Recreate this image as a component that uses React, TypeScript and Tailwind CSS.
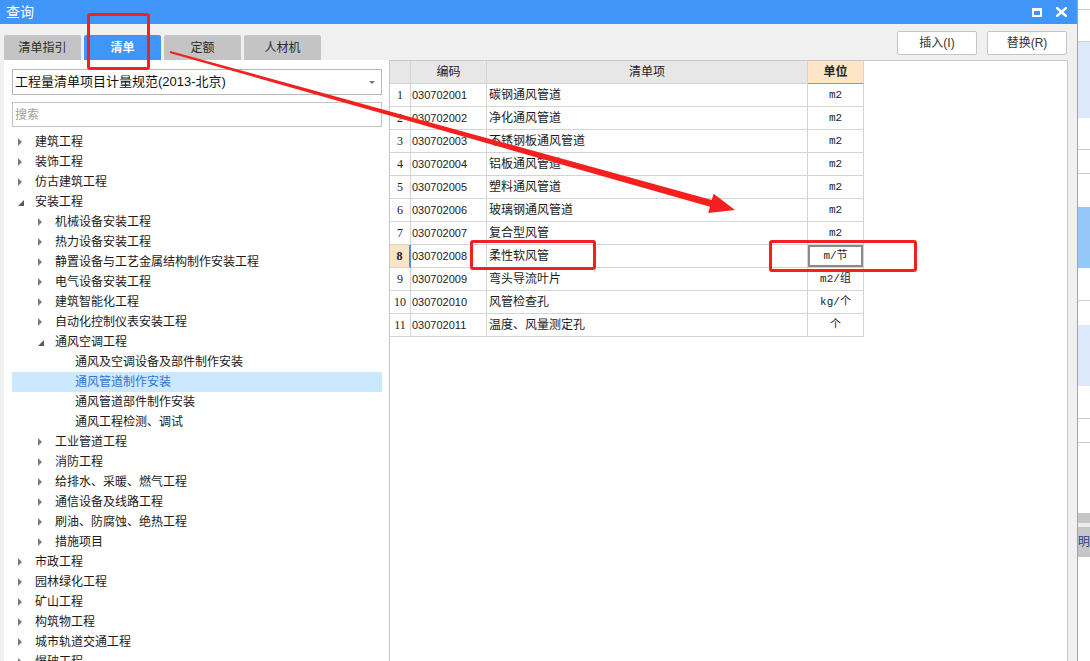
import React from "react";

const FONT = '"Liberation Sans","Noto Sans CJK SC",sans-serif';
const MONO = '"Liberation Mono","Noto Sans CJK SC",monospace';
const SERIF = '"Liberation Serif","Noto Sans CJK SC",serif';

type TNode = { label: string; level: number; arrow: "none" | "collapsed" | "expanded"; selected?: boolean };

const tree: TNode[] = [
  { label: "建筑工程", level: 0, arrow: "collapsed" },
  { label: "装饰工程", level: 0, arrow: "collapsed" },
  { label: "仿古建筑工程", level: 0, arrow: "collapsed" },
  { label: "安装工程", level: 0, arrow: "expanded" },
  { label: "机械设备安装工程", level: 1, arrow: "collapsed" },
  { label: "热力设备安装工程", level: 1, arrow: "collapsed" },
  { label: "静置设备与工艺金属结构制作安装工程", level: 1, arrow: "collapsed" },
  { label: "电气设备安装工程", level: 1, arrow: "collapsed" },
  { label: "建筑智能化工程", level: 1, arrow: "collapsed" },
  { label: "自动化控制仪表安装工程", level: 1, arrow: "collapsed" },
  { label: "通风空调工程", level: 1, arrow: "expanded" },
  { label: "通风及空调设备及部件制作安装", level: 2, arrow: "none" },
  { label: "通风管道制作安装", level: 2, arrow: "none", selected: true },
  { label: "通风管道部件制作安装", level: 2, arrow: "none" },
  { label: "通风工程检测、调试", level: 2, arrow: "none" },
  { label: "工业管道工程", level: 1, arrow: "collapsed" },
  { label: "消防工程", level: 1, arrow: "collapsed" },
  { label: "给排水、采暖、燃气工程", level: 1, arrow: "collapsed" },
  { label: "通信设备及线路工程", level: 1, arrow: "collapsed" },
  { label: "刷油、防腐蚀、绝热工程", level: 1, arrow: "collapsed" },
  { label: "措施项目", level: 1, arrow: "collapsed" },
  { label: "市政工程", level: 0, arrow: "collapsed" },
  { label: "园林绿化工程", level: 0, arrow: "collapsed" },
  { label: "矿山工程", level: 0, arrow: "collapsed" },
  { label: "构筑物工程", level: 0, arrow: "collapsed" },
  { label: "城市轨道交通工程", level: 0, arrow: "collapsed" },
  { label: "爆破工程", level: 0, arrow: "collapsed" },
];

const rows = [
  ["1", "030702001", "碳钢通风管道", "m2"],
  ["2", "030702002", "净化通风管道", "m2"],
  ["3", "030702003", "不锈钢板通风管道", "m2"],
  ["4", "030702004", "铝板通风管道", "m2"],
  ["5", "030702005", "塑料通风管道", "m2"],
  ["6", "030702006", "玻璃钢通风管道", "m2"],
  ["7", "030702007", "复合型风管", "m2"],
  ["8", "030702008", "柔性软风管", "m/节"],
  ["9", "030702009", "弯头导流叶片", "m2/组"],
  ["10", "030702010", "风管检查孔", "kg/个"],
  ["11", "030702011", "温度、风量测定孔", "个"],
];

function Arrow({ kind }: { kind: TNode["arrow"] }) {
  if (kind === "collapsed")
    return <div className="w-0 h-0 border-y-[4px] border-y-transparent border-l-[4px] border-l-[#7a7a7a]" />;
  if (kind === "expanded")
    return <div className="w-0 h-0 mt-[2px] border-b-[6px] border-b-[#5a5a5a] border-l-[6px] border-l-transparent" />;
  return null;
}

function TreeRow({ n }: { n: TNode }) {
  const pad = n.level === 0 ? "pl-[6px]" : n.level === 1 ? "pl-[26px]" : "pl-[46px]";
  return (
    <div className={`h-[20px] shrink-0 flex items-center ${pad} ${n.selected ? "bg-[#cce8ff]" : ""}`}>
      <div className="w-[17px] flex items-center">
        <Arrow kind={n.arrow} />
      </div>
      <span className={`text-[12px] leading-none whitespace-nowrap ${n.selected ? "text-[#2f74d6]" : "text-[#1a1a1a]"}`}>{n.label}</span>
    </div>
  );
}

function Tab({ label, active }: { label: string; active?: boolean }) {
  return (
    <div
      className={`w-[77px] h-[25px] pt-[1px] rounded-t-[2px] flex items-center justify-center text-[12px] ${
        active ? "bg-[#4096f8] text-white font-semibold" : "bg-[#c4c4c4] text-[#2a2a2a]"
      }`}
    >
      {label}
    </div>
  );
}

function Btn({ label }: { label: string }) {
  return (
    <div className="w-[80px] h-[24px] bg-white border border-[#c6c6c6] rounded-[2px] flex items-center justify-center text-[12px] text-[#333]">
      {label}
    </div>
  );
}

const cell = "border-r border-b border-[#d4d4d4] h-[23px] flex items-center";

function Table() {
  return (
    <div className="grid grid-cols-[21px_76px_321px_56px] w-[474px]">
      <div className={`${cell} bg-[#e7e7e7]`} />
      <div className={`${cell} bg-[#e7e7e7] justify-center text-[12px] text-[#222]`}>编码</div>
      <div className={`${cell} bg-[#e7e7e7] justify-center text-[12px] text-[#222]`}>清单项</div>
      <div className={`${cell} bg-[#fde5c6] justify-center text-[12px] font-bold text-[#222] border-b-[#5ea6ea]`}>单位</div>
      {rows.map((r) => {
        const sel = r[0] === "8";
        return (
          <React.Fragment key={r[0]}>
            <div
              className={`${cell} justify-center text-[12px] ${sel ? "bg-[#fde5c6] font-bold border-r-[#4a90e2] border-r-2" : "bg-white"} text-[#222]`}
              style={{ fontFamily: SERIF }}
            >
              {r[0]}
            </div>
            <div className={`${cell} bg-white pl-[1px] text-[11px] text-[#222]`}>{r[1]}</div>
            <div className={`${cell} bg-white pl-[2px] text-[12px] text-[#1a1a1a]`}>{r[2]}</div>
            <div className={`${cell} bg-white justify-center text-[11px] text-[#222] ${sel ? "p-0" : ""}`} style={{ fontFamily: MONO }}>
              {sel ? (
                <div className="w-full h-full border-2 border-[#8a8a8a] flex items-center justify-center">{r[3]}</div>
              ) : (
                r[3]
              )}
            </div>
          </React.Fragment>
        );
      })}
    </div>
  );
}

function OutsideStrip() {
  return (
    <div className="w-[12px] h-full flex flex-col bg-white">
      <div className="h-[10px] shrink-0 border-b border-[#cfcfcf]" />
      <div className="h-[32px] shrink-0 border-b border-[#cfcfcf]" />
      <div className="h-[76px] shrink-0 bg-[#dde8fb]" />
      <div className="h-[32px] shrink-0 border-b border-[#cfcfcf]" />
      <div className="h-[24px] shrink-0 border-b border-[#cfcfcf]" />
      <div className="h-[33px] shrink-0" />
      <div className="h-[61px] shrink-0 bg-[#93c8f7]" />
      <div className="h-[33px] shrink-0 border-b border-[#cfcfcf]" />
      <div className="h-[24px] shrink-0" />
      <div className="h-[61px] shrink-0 bg-[#dde8fb]" />
      <div className="h-[33px] shrink-0 border-b border-[#cfcfcf]" />
      <div className="h-[24px] shrink-0 border-b border-[#cfcfcf]" />
      <div className="h-[70px] shrink-0" />
      <div className="h-[10px] shrink-0 bg-[#c6c6c6]" />
      <div className="h-[4px] shrink-0 bg-[#ececec]" />
      <div className="h-[30px] shrink-0 bg-[#c6c6c6] flex items-center overflow-hidden">
        <span className="text-[12px] leading-none text-[#2a3a8a] whitespace-nowrap">明</span>
      </div>
      <div className="flex-1" />
    </div>
  );
}

export default function App() {
  return (
    <div className="relative w-[1090px] h-[661px] overflow-hidden flex bg-white" style={{ fontFamily: FONT }}>
      {/* Dialog */}
      <div className="w-[1078px] h-full flex flex-col bg-[#f0f0f0] border-r border-[#a3a3a3]">
        {/* title bar */}
        <div className="h-[24px] bg-[#4096f8] flex items-center justify-between pl-[6px] pr-[10px] shrink-0">
          <span className="text-[14px] text-white leading-none">查询</span>
          <div className="flex items-center gap-[14px]">
            <div className="w-[10px] h-[9px] border-white border-x-2 border-t-[3px] border-b-2" />
            <svg width="11" height="10" viewBox="0 0 11 10">
              <path d="M1 1 L10 9 M10 1 L1 9" stroke="white" strokeWidth="2.4" strokeLinecap="square" />
            </svg>
          </div>
        </div>
        {/* tab / button row */}
        <div className="h-[36px] flex justify-between pl-[4px] pr-[10px] shrink-0">
          <div className="flex gap-[3px] self-end">
            <Tab label="清单指引" />
            <Tab label="清单" active />
            <Tab label="定额" />
            <Tab label="人材机" />
          </div>
          <div className="flex gap-[10px] mt-[7px]">
            <Btn label="插入(I)" />
            <Btn label="替换(R)" />
          </div>
        </div>
        {/* content */}
        <div className="flex-1 flex pl-[4px] min-h-0">
          <div className="w-[385px] bg-white flex flex-col pt-[9px] pl-[8px] pr-[7px] overflow-hidden">
            <div className="h-[26px] shrink-0 border border-[#b8b8b8] bg-white flex items-center justify-between pl-[2px] pr-[6px]">
              <span className="text-[13px] text-[#111] whitespace-nowrap">工程量清单项目计量规范(2013-北京)</span>
              <div className="w-0 h-0 border-x-[3px] border-x-transparent border-t-[3px] border-t-[#777]" />
            </div>
            <div className="h-[25px] shrink-0 mt-[7px] border border-[#c4c4c4] bg-white flex items-center pl-[2px]">
              <span className="text-[12px] text-[#a0a0a0]">搜索</span>
            </div>
            <div className="mt-[5px] shrink-0 flex flex-col">
              {tree.map((n) => (
                <TreeRow key={n.label} n={n} />
              ))}
            </div>
          </div>
          <div className="w-[679px] bg-white border-l border-r border-t border-[#c8c8c8]">
            <Table />
          </div>
        </div>
      </div>
      <OutsideStrip />

      {/* annotations */}
      <div className="absolute inset-0 pointer-events-none">
        <div className="absolute left-[87px] top-[13px] w-[63px] h-[57px] border-[3px] border-[#f42020] rounded-[3px]" />
        <div className="absolute left-[470px] top-[240px] w-[126px] h-[30px] border-[3px] border-[#f42020] rounded-[3px]" />
        <div className="absolute left-[769px] top-[240px] w-[148px] h-[32px] border-[3px] border-[#f42020] rounded-[3px]" />
        <svg className="absolute left-0 top-0" width="1090" height="661" viewBox="0 0 1090 661">
          <polygon
            points="170.3,51 711.8,199.9 713.6,193.7 735,210 708.2,212.9 710,206.7 169.7,53"
            fill="#f42020"
          />
        </svg>
      </div>
    </div>
  );
}
